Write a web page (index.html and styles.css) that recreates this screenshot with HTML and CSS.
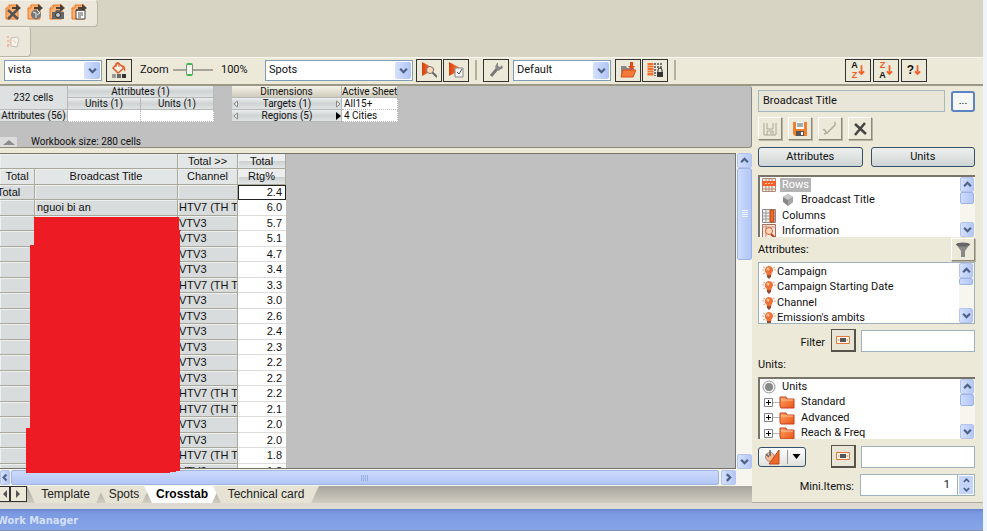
FILE: index.html
```html
<!DOCTYPE html>
<html lang="en">
<head>
<meta charset="utf-8">
<title>Work Manager</title>
<link rel="stylesheet" href="styles.css">
</head>
<body>
<svg class="defs" aria-hidden="true">
  <defs>
    <linearGradient id="or" x1="0" y1="0" x2="1" y2="1"><stop offset="0" stop-color="#ffa860"/><stop offset="1" stop-color="#e8521a"/></linearGradient>
    <linearGradient id="hot" x1="0" y1="0" x2="1" y2="0"><stop offset="0" stop-color="#d8400c"/><stop offset="1" stop-color="#ff9050"/></linearGradient>
    <symbol id="page" viewBox="0 0 16 16"><path d="M4 1h9v14H1V4z" fill="#ffb070" stroke="#ec7524"/><path d="M1 4h3V1" fill="#ffe4c8" stroke="#ec7524"/><path d="M7 3h4V0l5 4-5 4V5H7z" fill="#4a4036"/></symbol>
    <symbol id="up" viewBox="0 0 8 8"><path d="M1 5.500l3-3 3 3" fill="none" stroke="#4d6185" stroke-width="2"/></symbol>
    <symbol id="down" viewBox="0 0 8 8"><path d="M1 2.500l3 3 3-3" fill="none" stroke="#4d6185" stroke-width="2"/></symbol>
    <symbol id="left" viewBox="0 0 8 8"><path d="M5.500 1l-3 3 3 3" fill="none" stroke="#4d6185" stroke-width="2"/></symbol>
    <symbol id="right" viewBox="0 0 8 8"><path d="M2.500 1l3 3-3 3" fill="none" stroke="#4d6185" stroke-width="2"/></symbol>
    <symbol id="bulb" viewBox="0 0 14 14"><path d="M1 2l2 1M0 5h2M11 3l2-1M12 5h2M1 9l2-1" stroke="#f0a080"/><path d="M7 1a4.200 4.200 0 0 1 2.500 7.500V10h-5V8.500A4.200 4.200 0 0 1 7 1z" fill="#f07038"/><circle cx="6" cy="4" r="1.500" fill="#ffc8a0"/><path d="M5 10h4v2L7 14l-2-2z" fill="#9a4a30"/></symbol>
    <symbol id="folder" viewBox="0 0 16 14"><path d="M1 2h6l1 2h7v9H2L1 11z" fill="url(#or)" stroke="#c83c20"/><path d="M2 5h12" stroke="#ffc49c"/></symbol>
    <symbol id="plus" viewBox="0 0 9 9"><path d="M.5.5h8v8h-8z" fill="#fff" stroke="#848484"/><path d="M2 4.500h5M4.500 2v5" stroke="#000"/></symbol>
    <symbol id="field" viewBox="0 0 14 8"><path d="M.5.5h13v7H.5z" fill="#fff6e8" stroke="#e07840"/><path d="M4 2h6v4H4z" fill="#555"/><path d="M2 4h1.500M10.500 4H12" stroke="#888"/></symbol>
    <symbol id="disk" viewBox="0 0 16 16"><path d="M1 1h14v14H3l-2-2z" fill="currentColor"/><path d="M4 1h8v7H4z" fill="#fff"/><path d="M5 3h6M5 5h6" stroke="#555"/><path d="M4 10h8v5H4z" fill="#555"/><path d="M9 11h2v3H9z" fill="#fff"/></symbol>
  </defs>
</svg>
<div class="app">
  <header>
    <div class="chunk exports">
      <button class="plain" aria-label="Export to Excel"><svg viewBox="0 0 16 16"><use href="#page"/><path d="M3 6l10 9M12 6L3 15" stroke="#555" stroke-width="2.500"/></svg></button>
      <button class="plain" aria-label="Export to web"><svg viewBox="0 0 16 16"><use href="#page"/><circle cx="9" cy="10.500" r="5" fill="#777"/><path d="M6 8l3 1v5M10 6l3 3-3 2" fill="none" stroke="#eee"/></svg></button>
      <button class="plain" aria-label="Export image"><svg viewBox="0 0 16 16"><use href="#page"/><path d="M3 8h3l1-2h4l1 2h3v7H3z" fill="#666"/><circle cx="9" cy="11" r="2.500" fill="#ccc" stroke="#333"/></svg></button>
      <button class="plain" aria-label="Export notes"><svg viewBox="0 0 16 16"><use href="#page"/><path d="M5 6h9v9H5z" fill="#fff" stroke="#444"/><path d="M7 9h5M7 11h5M7 13h3" stroke="#555"/><path d="M6 5v2M8 5v2M10 5v2M12 5v2" stroke="#222"/></svg></button>
    </div>
    <div class="chunk single">
      <button class="plain faded" aria-label="Properties" disabled><svg viewBox="0 0 16 16"><path d="M2 2h2v2H2zM2 6h2v2H2zM2 10h2v3H2z" fill="#f09070"/><path d="M6 4l6-1 2 2-2 8-6-1z" fill="#fff" stroke="#999"/><path d="M5 5v7M8 6l3 3" stroke="#f0a080"/></svg></button>
    </div>
    <div class="bar">
      <span class="combo small"><select aria-label="View"><option>vista</option></select><i><svg><use href="#down"/></svg></i></span>
      <button class="tool" aria-label="Fill"><svg viewBox="0 0 16 16"><path d="M2 6l5-5 6 5-6 5z" fill="#fff0e4" stroke="#e05a28" stroke-width="1.500"/><path d="M5 5V1h3v4" fill="none" stroke="#e05a28"/><path d="M10 3c4 0 5 3 4 7l-2-4z" fill="#e8622c"/><path d="M1 12h4v4H1z" fill="#999"/><path d="M6 12h4v4H6z" fill="#666"/><path d="M11 12h4v4h-4z" fill="#333"/></svg></button>
      <label class="zoom" for="zoom">Zoom</label>
      <input id="zoom" class="slider" type="range" min="0" max="100" value="40">
      <output class="percent" for="zoom">100%</output>
      <span class="combo wide"><select aria-label="Sheet"><option>Spots</option></select><i><svg><use href="#down"/></svg></i></span>
      <button class="tool" aria-label="Preview"><svg viewBox="0 0 16 16"><path d="M1 0l13 7-13 7z" fill="url(#hot)"/><circle cx="9" cy="8" r="3.500" fill="#ffd8b8" stroke="#777"/><path d="M11.500 10.500L16 15" stroke="#666" stroke-width="2"/></svg></button>
      <button class="tool flush" aria-label="Run selection"><svg viewBox="0 0 16 16"><path d="M1 0l13 7-13 7z" fill="url(#hot)"/><path d="M7 6h8v9H7z" fill="#f4f4f4" stroke="#888"/><path d="M9 10l2 2 3-5" fill="none" stroke="#555"/></svg></button>
      <span class="rule"></span>
      <button class="tool spaced" aria-label="Settings"><svg viewBox="0 0 16 16"><path d="M3 14l6-7" stroke="#777" stroke-width="3"/><path d="M9 1L7 5l3 4 5-3-1-3-2 2-2-1V1z" fill="#888"/></svg></button>
      <span class="combo small"><select aria-label="Profile"><option>Default</option></select><i><svg><use href="#down"/></svg></i></span>
      <button class="tool" aria-label="Open"><svg viewBox="0 0 16 16"><path d="M1 4h5l1 2h7v8H1z" fill="#888"/><path d="M3 8h13l-3 7H1z" fill="#f47838" stroke="#d85020"/><path d="M10 0h3v4h2l-3.500 4L8 4h2z" fill="#e04c18"/></svg></button>
      <button class="tool flush" aria-label="Lock columns"><svg viewBox="0 0 16 16"><path d="M2 1v13M5 1v13" stroke="#f07030" stroke-width="3" stroke-dasharray="2 .5"/><path d="M8 1v13M11 1v5M14 1v5" stroke="#777" stroke-width="2" stroke-dasharray="2 1"/><path d="M11 10V8a2 2 0 0 1 4 0v2" fill="none" stroke="#222"/><path d="M10 10h6v5h-6z" fill="#333"/></svg></button>
      <span class="rule"></span>
      <div class="sorts">
        <button class="tool sort" aria-label="Sort ascending"><span><b>A</b><b class="hot">Z</b></span><svg viewBox="0 0 8 12"><path d="M4 0v10M1 7l3 3 3-3" fill="none" stroke="#f06028" stroke-width="2"/></svg></button>
        <button class="tool sort" aria-label="Sort descending"><span><b class="hot">Z</b><b>A</b></span><svg viewBox="0 0 8 12"><path d="M4 0v10M1 7l3 3 3-3" fill="none" stroke="#f06028" stroke-width="2"/></svg></button>
        <button class="tool sort" aria-label="Custom sort"><span><b class="ask">?</b></span><svg viewBox="0 0 8 12"><path d="M4 0v10M1 7l3 3 3-3" fill="none" stroke="#f06028" stroke-width="2"/></svg></button>
      </div>
    </div>
  </header>

  <div class="work">
    <main>
      <section class="summary">
        <table class="pivot attrs">
          <tr><th rowspan="2" class="first">232 cells</th><th colspan="2">Attributes (1)</th></tr>
          <tr><th>Units (1)</th><th>Units (1)</th></tr>
          <tr><th>Attributes (56)</th><td></td><td></td></tr>
        </table>
        <table class="pivot dims">
          <tr><th class="warm">Dimensions</th><th class="warm sheet">Active Sheet</th></tr>
          <tr><th><div class="dim"><svg viewBox="0 0 5 8"><path d="M4.500 1v6L1 4z" fill="#eee" stroke="#888"/></svg>Targets (1)<svg viewBox="0 0 5 8"><path d="M.5 1v6L4 4z" fill="#eee" stroke="#888"/></svg></div></th><td>All15+</td></tr>
          <tr><th><div class="dim"><svg viewBox="0 0 5 8"><path d="M4.500 1v6L1 4z" fill="#eee" stroke="#888"/></svg>Regions (5)<svg viewBox="0 0 5 8"><path d="M0 0v8l5-4z"/></svg></div></th><td>4 Cities</td></tr>
        </table>
        <div class="status"><button class="fold" aria-label="Collapse"><svg viewBox="0 0 12 6"><path d="M0 6l6-5 6 5z" fill="#8c8c8c"/></svg></button><span>Workbook size: 280 cells</span></div>
      </section>

      <section class="sheet-area">
        <div class="canvas">
          <table class="data">
            <colgroup><col class="c1"><col class="c2"><col class="c3"><col class="c4"></colgroup>
            <thead>
              <tr><th colspan="2"></th><th>Total &gt;&gt;</th><th class="shine">Total</th></tr>
              <tr><th>Total</th><th>Broadcast Title</th><th>Channel</th><th class="shine">Rtg%</th></tr>
            </thead>
            <tbody>
              <tr><th class="cut">Total</th><th></th><th></th><td class="active">2.4</td></tr>
              <tr><th></th><th>nguoi bi an</th><th>HTV7 (TH T</th><td>6.0</td></tr>
              <tr><th></th><th></th><th>VTV3</th><td>5.7</td></tr>
              <tr><th></th><th></th><th>VTV3</th><td>5.1</td></tr>
              <tr><th></th><th></th><th>VTV3</th><td>4.7</td></tr>
              <tr><th></th><th></th><th>VTV3</th><td>3.4</td></tr>
              <tr><th></th><th></th><th>HTV7 (TH T</th><td>3.3</td></tr>
              <tr><th></th><th></th><th>VTV3</th><td>3.0</td></tr>
              <tr><th></th><th></th><th>VTV3</th><td>2.6</td></tr>
              <tr><th></th><th></th><th>VTV3</th><td>2.4</td></tr>
              <tr><th></th><th></th><th>VTV3</th><td>2.3</td></tr>
              <tr><th></th><th></th><th>VTV3</th><td>2.2</td></tr>
              <tr><th></th><th></th><th>VTV3</th><td>2.2</td></tr>
              <tr><th></th><th></th><th>HTV7 (TH T</th><td>2.2</td></tr>
              <tr><th></th><th></th><th>HTV7 (TH T</th><td>2.1</td></tr>
              <tr><th></th><th></th><th>VTV3</th><td>2.0</td></tr>
              <tr><th></th><th></th><th>VTV3</th><td>2.0</td></tr>
              <tr><th></th><th></th><th>HTV7 (TH T</th><td>1.8</td></tr>
              <tr><th></th><th></th><th>VTV3</th><td>1.8</td></tr>
            </tbody>
          </table>
        </div>
        <div class="vscroll">
          <button aria-label="Scroll up"><svg><use href="#up"/></svg></button>
          <span class="thumb"><svg viewBox="0 0 6 8"><path d="M0 .5h6M0 2.500h6M0 4.500h6M0 6.500h6" stroke="#eef4ff"/></svg></span>
          <button class="end" aria-label="Scroll down"><svg><use href="#down"/></svg></button>
        </div>
        <svg class="mask" viewBox="0 0 181 256" aria-hidden="true"><path d="M34 0H179V13H181V14H180V254H176V255H170V256H26V211H30V28H34z" fill="#ed1c24"/></svg>
      </section>
      <div class="hscroll">
        <button aria-label="Scroll left"><svg><use href="#left"/></svg></button>
        <span class="thumb"><svg viewBox="0 0 8 6"><path d="M.5 0v6M2.500 0v6M4.500 0v6M6.500 0v6" stroke="#98b0e8"/></svg></span>
        <button aria-label="Scroll right"><svg><use href="#right"/></svg></button>
      </div>
      <nav class="tabs">
        <button class="step" aria-label="Previous sheet"><svg viewBox="0 0 5 8"><path d="M5 0v8L1 4z" fill="#555"/></svg></button>
        <button class="step" aria-label="Next sheet"><svg viewBox="0 0 5 8"><path d="M0 0v8l4-4z" fill="#555"/></svg></button>
        <a href="#template" class="tab t1">Template</a>
        <a href="#spots" class="tab t2">Spots</a>
        <a href="#crosstab" class="tab t3 on">Crosstab</a>
        <a href="#technical" class="tab t4">Technical card</a>
      </nav>
    </main>

    <aside>
      <div class="row title">
        <input class="name" aria-label="Title" value="Broadcast Title" readonly>
        <button class="more" aria-label="Browse">...</button>
      </div>
      <div class="row files">
        <button class="raised" aria-label="Save" disabled><svg viewBox="0 0 16 16"><path d="M2 2v12h12V2M5 2v6h6V2M5 14v-4h6v4M9 11v2" fill="none" stroke="#aaa798"/></svg></button>
        <button class="raised orange" aria-label="Save as"><svg><use href="#disk"/></svg></button>
        <button class="raised" aria-label="Edit" disabled><svg viewBox="0 0 16 16"><path d="M2 13l3-1 8-8V1M1 9c2-2 2 2 4 3" fill="none" stroke="#b0ad9c" stroke-width="1.500"/></svg></button>
        <button class="raised" aria-label="Delete"><svg viewBox="0 0 16 16"><path d="M3 3l11 10M13 2L3 14" stroke="#444" stroke-width="2.500"/></svg></button>
      </div>
      <div class="row modes"><button>Attributes</button><button>Units</button></div>
      <div class="list tree top">
        <ul>
          <li><svg class="ic" viewBox="0 0 14 14"><path d="M0 0h14v14H0z" fill="#f4ece4"/><path d="M.5.5h13v13H.5zM4 0v14M7 0v14M10 0v14M0 11h14" fill="none" stroke="#b08c78"/><path d="M0 3h14v5H0z" fill="#f06028"/><path d="M3 5.500h2M6 5.500h2M9 5.500h2" stroke="#ffc4a0"/></svg><span class="picked">Rows</span></li>
          <li class="child"><svg class="ic" viewBox="0 0 14 14"><path d="M2 4l5-3 5 3v5l-5 4-5-4z" fill="#888"/><path d="M2 4l5-3 5 3-5 3z" fill="#c8c8c8"/><path d="M7 7v6l5-4V4z" fill="#a6a6a6"/></svg><span>Broadcast Title</span></li>
          <li><svg class="ic" viewBox="0 0 14 14"><path d="M.5.5h13v13H.5z" fill="#f4f0ec" stroke="#888"/><path d="M4 0v14M0 4h14M0 7h14M0 10h14" stroke="#999"/><path d="M8 1h4v12H8z" fill="#f06828" stroke="#b84820"/></svg><span>Columns</span></li>
          <li><svg class="ic" viewBox="0 0 14 14"><path d="M.5.5h13v13H.5z" fill="#f8e8dc" stroke="#a86850"/><path d="M0 3h14M4 0v14" stroke="#c09080"/><circle cx="7" cy="7" r="3.500" fill="#ffd8b8" stroke="#d86030"/><path d="M9 10l4 4" stroke="#b04020" stroke-width="2"/></svg><span>Information</span></li>
        </ul>
        <div class="vscroll mini"><button aria-label="Up"><svg><use href="#up"/></svg></button><span class="thumb tall"></span><button class="end" aria-label="Down"><svg><use href="#down"/></svg></button></div>
      </div>
      <div class="row head"><span>Attributes:</span><button class="raised" aria-label="Filter attributes"><svg viewBox="0 0 16 16"><path d="M1 2h14L10 9v6H6V9z" fill="#888"/><ellipse cx="8" cy="2.500" rx="7" ry="2" fill="#666"/></svg></button></div>
      <div class="list flat">
        <ul>
          <li><svg class="ic"><use href="#bulb"/></svg><span>Campaign</span></li>
          <li><svg class="ic"><use href="#bulb"/></svg><span>Campaign Starting Date</span></li>
          <li><svg class="ic"><use href="#bulb"/></svg><span>Channel</span></li>
          <li><svg class="ic"><use href="#bulb"/></svg><span>Emission's ambits</span></li>
        </ul>
        <div class="vscroll mini"><button aria-label="Up"><svg><use href="#up"/></svg></button><span class="thumb"></span><button class="end" aria-label="Down"><svg><use href="#down"/></svg></button></div>
      </div>
      <div class="row form filter"><label for="f1">Filter</label><button class="thick" aria-label="Filter options"><svg><use href="#field"/></svg></button><input id="f1"></div>
      <div class="caption">Units:</div>
      <div class="list tree units">
        <ul>
          <li><svg class="ic" viewBox="0 0 14 14"><circle cx="7" cy="7" r="6" fill="#f4f4f4" stroke="#999"/><circle cx="7" cy="7" r="4" fill="#888"/></svg><span>Units</span></li>
          <li class="node"><svg class="plus"><use href="#plus"/></svg><svg class="fold-ic"><use href="#folder"/></svg><span>Standard</span></li>
          <li class="node"><svg class="plus"><use href="#plus"/></svg><svg class="fold-ic"><use href="#folder"/></svg><span>Advanced</span></li>
          <li class="node"><svg class="plus"><use href="#plus"/></svg><svg class="fold-ic"><use href="#folder"/></svg><span>Reach &amp; Freq</span></li>
        </ul>
        <div class="vscroll mini"><button aria-label="Up"><svg><use href="#up"/></svg></button><span class="thumb tall"></span><button class="end" aria-label="Down"><svg><use href="#down"/></svg></button></div>
      </div>
      <div class="row form tools">
        <button class="split" aria-label="Tools"><svg viewBox="0 0 16 16"><circle cx="6" cy="8" r="4.500" fill="#f8b890" stroke="#999"/><path d="M6 1v6M2 5l3 3" stroke="#666" stroke-width="1.500"/><path d="M15 1v14H5z" fill="#f06828" stroke="#c04818"/></svg><i></i><svg class="caret" viewBox="0 0 8 5"><path d="M0 0h8L4 5z"/></svg></button>
        <button class="thick" aria-label="Unit filter options"><svg><use href="#field"/></svg></button><input aria-label="Unit filter">
      </div>
      <div class="row form items"><label for="mini">Mini.Items:</label><span class="spin"><input id="mini" value="1"><span><button aria-label="Increase"><svg><use href="#up"/></svg></button><button aria-label="Decrease"><svg><use href="#down"/></svg></button></span></span></div>
    </aside>
  </div>
  <footer>Work Manager</footer>
</div>
</body>
</html>
```

FILE: styles.css
```css
* { box-sizing: border-box; }
body {
  margin: 0;
  background: #f0f4fc;
  color: #111;
  font: 11px/14px Roboto, Tahoma, "Liberation Sans", sans-serif;
  overflow: hidden;
}
button, input, select { font: inherit; color: inherit; margin: 0; padding: 0; border-radius: 0; }
button { display: flex; align-items: center; justify-content: center; background: none; border: 0; }
ul { list-style: none; margin: 0; padding: 0; }
table { border-collapse: separate; border-spacing: 0; }
th, td { font-weight: normal; padding: 0; }
.defs { position: absolute; width: 0; height: 0; }
.app { display: flex; flex-direction: column; height: 100vh; margin-right: 4px; background: #ece9d8; }

/* toolbars */
header { background: #d8d4c4; }
.chunk {
  display: flex; align-items: center; width: max-content;
  background: #ebe7da; border: 1px solid #b8b4a4; border-left: 0; border-top-color: #f4f2e8;
  border-radius: 0 4px 4px 0;
}
.exports { height: 27px; gap: 6px; padding: 0 10px 4px 5px; }
.single { height: 30px; padding: 0 9px 0 5px; }
.plain svg, .tool svg, .raised svg { width: 16px; height: 16px; }
.faded { opacity: .5; }
.bar {
  display: flex; align-items: center; height: 29px; padding: 0 56px 2px 4px;
  background: #ece9d8; border-top: 1px solid #f8f6ee; border-bottom: 2px solid #9c9886;
}
.combo { display: grid; grid-template-columns: 1fr 16px; height: 21px; background: #fff; border: 1px solid #7f9db9; padding: 1px; }
.combo select { grid-area: 1 / 1 / 2 / 3; appearance: none; border: 0; background: transparent; padding-left: 2px; outline: 0; }
.combo i { grid-area: 1 / 2; pointer-events: none; display: flex; align-items: center; justify-content: center; background: linear-gradient(90deg, #d4e0fc, #b0c4f4); border-radius: 2px; }
.combo svg { width: 9px; height: 9px; }
.small { width: 98px; margin-right: 4px; }
.wide { width: 148px; margin-right: 3px; }
.tool { width: 26px; height: 23px; border: 1px solid #333; background: #ece9d8; flex: none; }
.flush { margin-left: 1px; }
.spaced { margin-right: 4px; }
.zoom { width: 33px; margin-left: 8px; }
.slider { width: 40px; height: 16px; margin: 0 8px 0 0; appearance: none; background: transparent; }
.slider::-webkit-slider-runnable-track { height: 2px; background: #a8a598; }
.slider::-webkit-slider-thumb { appearance: none; width: 7px; height: 13px; margin-top: -6px; background: #f4f4ee; border: 1px solid #789080; border-top: 2px solid #3cb850; border-bottom: 2px solid #3cb850; border-radius: 2px; }
.percent { width: 44px; }
.rule { width: 2px; height: 20px; margin: 0 6px; background: #b4b09e; }
.sorts { display: flex; gap: 2px; margin-left: auto; }
.sort span { display: grid; }
.sort b { font: bold 9px/10px "Liberation Sans", sans-serif; }
.sort .ask { font-size: 12px; line-height: 12px; }
.sort .hot { color: #f06028; }
.sort svg { width: 7px; height: 11px; }

/* work area */
.work { flex: 1; min-height: 0; display: flex; border-bottom: 6px solid #dedbd0; }
main { flex: 1; min-width: 0; display: flex; flex-direction: column; }
.summary {
  display: grid; grid-template-columns: 214px 166px; column-gap: 18px; align-content: space-between;
  height: 62px; background: #c0c0c0; border: solid #8c8a80; border-width: 0 1px 1px 0; border-radius: 0 3px 3px 0;
}
.pivot { width: 100%; table-layout: fixed; font-size: 10px; line-height: 11px; }
.attrs .first { width: 68px; }
.dims .sheet { width: 56px; }
.pivot th { height: 12px; background: linear-gradient(#eceeee, #cfd3d3 50%, #dfe3e3); border: solid #b4b8b8; border-width: 0 1px 1px 0; white-space: nowrap; overflow: hidden; }
.pivot .first { background: #dde1e1; }
.pivot .warm { background: linear-gradient(#f4f1e6, #d0ccbc); }
.pivot td { background: #fff; border: dotted #bbb; border-width: 0 1px 1px 0; white-space: nowrap; padding-left: 2px; }
.dim { display: flex; justify-content: space-between; align-items: center; padding-left: 1px; }
.dim svg { width: 5px; height: 8px; }
.status { grid-column: 1 / 3; display: flex; align-items: end; gap: 14px; font-size: 10px; line-height: 10px; }
.fold { width: 17px; height: 10px; background: #dcdcdc; }
.fold svg { width: 12px; height: 6px; }

.sheet-area { position: relative; flex: 1; min-height: 0; display: flex; margin-top: 5px; }
.canvas { flex: 1; min-width: 0; overflow: hidden; background: #c0c0c0; border: solid #76746a; border-width: 1px 1px 1px 0; }
.data { width: 286px; table-layout: fixed; font: 11px/13px "Liberation Sans", Arial, sans-serif; }
.c1 { width: 35px; } .c2 { width: 143px; } .c3 { width: 60px; } .c4 { width: 48px; }
.data tr { height: 15px; }
.data tr:nth-child(even) { height: 16px; }
.data th { background: #d8dcdc; border: solid #a9a89c; border-width: 0 1px 1px 0; box-shadow: inset 1px 1px #eef0f0; white-space: nowrap; overflow: hidden; }
.data thead th { background: #e3e6e6; }
.data thead .shine { background: linear-gradient(#eceeee 50%, #ccd0d0 50%, #e2e6e6); }
.data tbody th { text-align: left; padding-left: 2px; }
.data tbody th:nth-child(3) { padding-left: 1px; }
.data tbody th:first-child { padding: 0; }
.data tbody .cut { text-indent: -3px; }
.data td { background: #fff; text-align: right; padding-right: 4px; border-bottom: 1px solid #dcdcd8; }
.data .active { border: 1px solid #222; padding-right: 3px; }
.mask { position: absolute; left: 0; top: 64px; width: 181px; height: 256px; }

.vscroll { display: flex; flex-direction: column; width: 16px; background: #f6f5ee; padding-left: 1px; }
.vscroll button, .hscroll button { flex: none; width: 15px; height: 15px; background: linear-gradient(90deg, #d4e0fc, #b4c8f6); border: 1px solid #b4c4ec; border-radius: 2px; }
.vscroll button svg, .hscroll button svg { width: 9px; height: 9px; }
.thumb { display: flex; align-items: center; justify-content: center; border: 1px solid #a0b4e4; border-radius: 2px; }
.vscroll .thumb { height: 92px; background: linear-gradient(90deg, #ccdcfe, #b2c6f6); }
.thumb svg { width: 8px; height: 8px; }
.vscroll .end { margin-top: auto; }
.hscroll { display: flex; height: 17px; padding: 1px 16px 1px 0; background: #f6f5ee; }
.hscroll button:first-child { width: 10px; }
.hscroll .thumb { flex: 1; margin: 0 2px 0 1px; background: linear-gradient(#ccdafc, #b2c6f6); }

.tabs { display: flex; height: 17px; background: linear-gradient(#a8a59e, #d0ccc0); font: 12px/16px "Liberation Sans", Arial, sans-serif; }
.step { width: 17px; height: 16px; background: #ece9d8; border: 1px solid #333; }
.step:first-child { width: 10px; border-left: 0; }
.step svg { width: 5px; height: 8px; }
.tab { color: #222; text-decoration: none; text-align: center; background: #e6e3d4; clip-path: polygon(0 0, 100% 0, calc(100% - 8px) 100%, 8px 100%); white-space: nowrap; }
.t1 { width: 77px; }
.t2 { width: 52px; margin-left: -6px; }
.t3 { width: 76px; margin-left: -6px; }
.t4 { width: 106px; margin-left: -7px; }
.on { background: #fff; color: #000; font-weight: bold; }

/* side panel */
aside { width: 231px; padding: 4px 8px 0 6px; border-bottom: 1px solid #b0ad9e; }
.row { display: flex; align-items: center; }
.title { gap: 6px; height: 22px; }
.name { flex: 1; min-width: 0; height: 22px; background: #e8e6d8; border: 1px solid #a4b8c0; padding: 0 4px 2px; }
.more { width: 24px; height: 21px; border: 2px solid #5c84c4; border-radius: 3px; background: #f6f6f4; }
.files { gap: 6px; margin-top: 5px; }
.raised { width: 24px; height: 23px; background: #ece9d8; border: 1px solid; border-color: #fff #8c897a #8c897a #fff; box-shadow: 1px 1px #b8b5a4; }
.orange { color: #f08030; }
.modes { gap: 8px; margin-top: 7px; }
.modes button { flex: 1; height: 20px; border: 1px solid #34506c; border-radius: 3px; background: linear-gradient(#eef0ee, #cfd5d5); }
.list { display: flex; height: 62px; background: #fff; border: 1px solid #9db2bc; overflow: hidden; }
.list ul { flex: 1; min-width: 0; padding-top: 1px; }
.tree { border: solid #77756a; border-width: 2px 0 0 2px; }
.tree ul { padding-top: 0; }
.top { margin-top: 8px; }
.list li { display: flex; align-items: center; height: 15px; white-space: nowrap; padding-left: 2px; }
.list li:nth-child(even) { height: 16px; }
.ic { width: 14px; height: 14px; flex: none; }
.tree li { gap: 4px; }
.tree span { padding: 0 2px; }
.list .child { padding-left: 21px; }
.flat li { gap: 1px; padding-left: 3px; }
.picked { background: #b4b4b4; color: #fff; }
.plus { width: 9px; height: 9px; }
.list .node { gap: 6px; padding-left: 4px; background: linear-gradient(90deg, transparent 13px, #bbb 13px, #bbb 20px, transparent 20px) 0 50% / 100% 1px no-repeat; }
.node span { padding-left: 0; }
.fold-ic { width: 16px; height: 14px; }
.vscroll.mini { width: 15px; padding: 0; }
.mini button { width: 14px; height: 15px; }
.mini .thumb { width: 14px; height: 7px; }
.mini .tall { height: 12px; }
.head { height: 25px; justify-content: space-between; }
.form { justify-content: flex-end; }
.form input { width: 114px; height: 22px; border: 1px solid #9db2bc; background: #fff; }
.form label { margin-right: 6px; padding-top: 4px; }
.thick { width: 25px; height: 23px; margin-right: 5px; background: #e8e5d6; border: solid #55534a; border-width: 1px 2px 2px 1px; }
.thick svg { width: 14px; height: 8px; }
.filter { margin-top: 5px; }
.caption { margin: 6px 0 5px; }
.tools { margin-top: 6px; }
.split { width: 48px; height: 20px; margin-right: auto; gap: 4px; border: 1px solid #34506c; border-radius: 3px; background: linear-gradient(#fff, #dfe1dc); }
.split svg { width: 16px; height: 16px; }
.split i { width: 1px; height: 14px; margin-left: 3px; background: #999; }
.split .caret { width: 9px; height: 5px; }
.items { margin-top: 6px; }
.spin { display: flex; width: 115px; height: 22px; border: 1px solid #9db2bc; background: #fff; }
.spin input { flex: 1; min-width: 0; height: 18px; border: 0; text-align: right; padding-right: 7px; }
.spin > span { display: grid; width: 17px; padding: 1px; border-left: 1px solid #9db2bc; }
.spin button { background: #c4d4fa; height: 9px; }
.spin svg { width: 7px; height: 7px; }

footer { height: 22px; padding: 5px 0 0; text-indent: -3px; background: linear-gradient(#6884cc, #7c9ae2 20%, #86a4e8); border-bottom: 1px solid #8890a8; color: #d4e0fa; font: bold 11px/14px "DejaVu Sans Condensed", Tahoma, sans-serif; }
```
